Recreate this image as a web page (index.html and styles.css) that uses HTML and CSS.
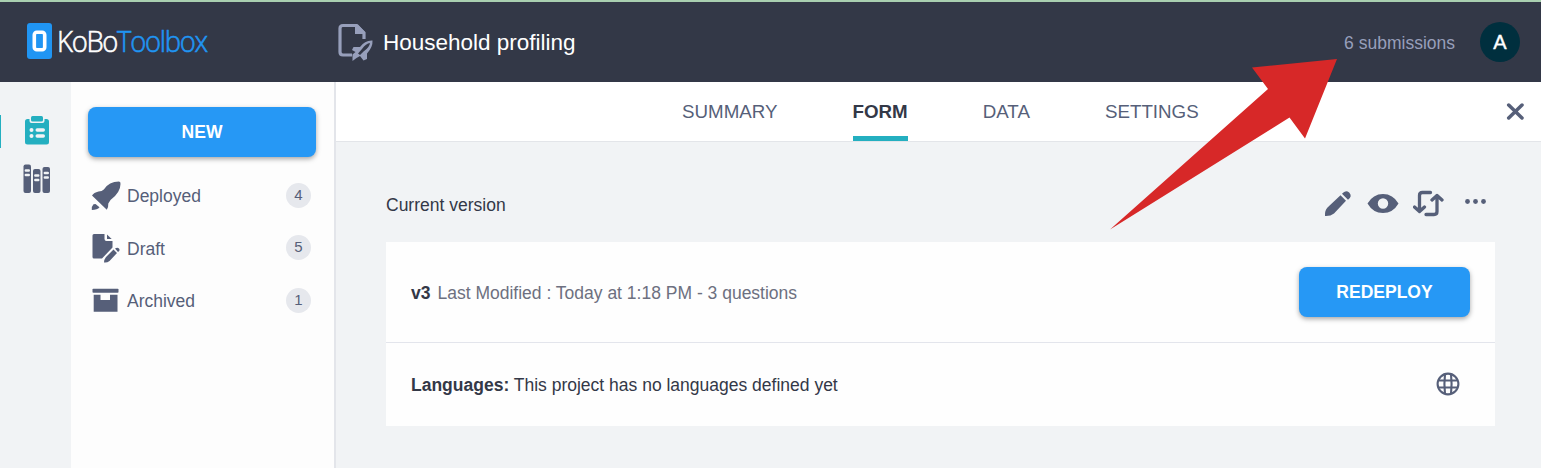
FILE: index.html
```html
<!DOCTYPE html>
<html lang="en">
<head>
<meta charset="utf-8">
<title>Household profiling | KoBoToolbox</title>
<link rel="stylesheet" href="styles.css">
</head>
<body>
<header class="header">
  <a class="logo">
    <svg width="25" height="36" viewBox="0 0 25 36">
      <rect width="25" height="36" rx="3" fill="#2095f3"/>
      <rect x="7.300" y="9.300" width="10.400" height="17.400" rx="2.500" fill="#2095f3" stroke="#fff" stroke-width="3.600"/>
    </svg>
    <span class="logo-text">KoBo<span class="logo-accent">Toolbox</span></span>
  </a>
  <div class="project">
    <svg width="36" height="40" viewBox="0 0 36 40" fill="#979fbb">
      <path d="M14 33H5Q2 33 2 30V6.500Q2 3.500 5 3.500H18.500L26 11V17" fill="none" stroke="#979fbb" stroke-width="3.200"/>
      <path d="M17 3V12H27V10L20 2.500Z"/>
      <path fill-rule="evenodd" d="M34.500 18.500Q27 18 22 25H15.500L14 28L17.500 30L14.500 32.500V39L18.500 36L22 34L25.500 38.500L29 37V31.500Q35 25 34.500 18.500ZM32 21Q31.500 25.500 25.500 29.500L22 33L20 31.500L24 27Q28 21.500 32 21Z"/>
    </svg>
    <h1 class="title">Household profiling</h1>
  </div>
  <span class="submissions">6 submissions</span>
  <span class="avatar">A</span>
</header>
<div class="body">
  <nav class="rail">
    <a class="rail-item active">
      <svg width="28" height="30" viewBox="0.5 0 28 30">
        <path d="M4 3H6V5Q6 7 8 7H19Q21 7 21 5V3H23Q25.500 3 25.500 5.500V26Q25.500 28.500 23 28.500H4Q1.500 28.500 1.500 26V5.500Q1.500 3 4 3Z" fill="#24afc0"/>
        <rect x="7.500" y="0" width="12" height="5.500" rx="1.500" fill="#24afc0"/>
        <g fill="#f1f3f5"><circle cx="8" cy="14" r="2"/><circle cx="8" cy="20" r="2"/><rect x="12" y="12.200" width="9.500" height="3.600" rx="1.700"/><rect x="12" y="18.200" width="9.500" height="3.600" rx="1.700"/></g>
      </svg>
    </a>
    <a class="rail-item">
      <svg width="28" height="30" viewBox="0 0 28 30">
        <g fill="#565f79"><rect x=".500" y=".500" width="7.500" height="28.500" rx="2"/><rect x="10" y="5" width="7.500" height="24" rx="2"/><rect x="19.500" y="3" width="7.500" height="26" rx="2"/></g>
        <path d="M2.800 6.500h3M2.800 11h3M12.300 11.500h3M12.300 16h3M21.800 9h3M21.800 13.500h3" stroke="#f1f3f5" stroke-width="2.400" stroke-linecap="round"/>
      </svg>
    </a>
  </nav>
  <aside class="drawer">
    <button class="button button-new">NEW</button>
    <div class="group">
      <svg width="30" height="32" viewBox="0 -1 30 32" fill="#565f79">
        <path d="M28 1.500Q18 1.500 12.800 9.500Q11 11.300 7.500 11.500Q2.800 12.500 1 15.500L15.800 29.800Q17.500 27.500 17.300 23.500L19.500 20Q29.500 12.500 29.500 4Q29.800 1.500 28 1.500Z"/><path d="M4.500 24L8.500 27.300Q6.500 30 .800 30Q.500 26 2.500 24.200Z"/>
      </svg><span class="group-name">Deployed</span><span class="count">4</span>
    </div>
    <div class="group">
      <svg width="30" height="30" viewBox="0 -.5 30 30" fill="#565f79">
        <path d="M3 .500H13.500V5.500Q13.500 7.500 15.500 7.500H21.500V14L11 25H3Q1.500 25 1.500 23.500V2Q1.500 .500 3 .500Z"/><path d="M16 1L20.700 5.500H16Z"/><path d="M22.500 16L26 19.500L18.500 27.500Q16 29.500 13 29Q13 26 15 23.500ZM24 15Q26.500 13.500 28 15Q29.500 17 27 18.500Z"/>
      </svg><span class="group-name">Draft</span><span class="count">5</span>
    </div>
    <div class="group">
      <svg width="30" height="30" viewBox="0 0 30 30" fill="#565f79">
        <rect x="1.500" y="3.700" width="26" height="4" rx=".800"/><path d="M2.700 9.700H9.500V15H19V9.700H26.500V26.700H2.700Z"/>
      </svg><span class="group-name">Archived</span><span class="count">1</span>
    </div>
  </aside>
  <main class="main">
    <nav class="tabs">
      <a class="tab">SUMMARY</a><a class="tab selected">FORM</a><a class="tab">DATA</a><a class="tab">SETTINGS</a>
      <svg class="close" width="18" height="18" viewBox="0 0 18 18"><path d="M2.700 3L16 16M16 3L2.700 16" stroke="#565f79" stroke-width="3.500" stroke-linecap="round"/></svg>
    </nav>
    <section class="content">
      <div class="toolbar">
        <h2 class="section-title">Current version</h2>
        <div class="actions">
          <svg width="30" height="30" viewBox="0 0 30 30" fill="#565f79"><path d="M17.500 6.200L23 11.700L11 24.500Q7.500 27.300 2 27Q1.500 21.500 4.500 18.500ZM19 4.800Q22.500 .500 26.200 3.500Q29.800 7.500 25 10.800Z"/></svg>
          <svg width="32" height="30" viewBox="0 0 32 30" fill="#565f79"><path fill-rule="evenodd" d="M.500 14.500Q6 5 16 5Q26 5 31.500 14.500Q26 24 16 24Q6 24 .500 14.500ZM21.200 14.500A5.200 5.200 0 1 0 10.800 14.500A5.200 5.200 0 1 0 21.200 14.500Z"/></svg>
          <svg width="32" height="30" viewBox="1 0 32 30" fill="none" stroke="#565f79" stroke-width="3.300" stroke-linecap="round" stroke-linejoin="round"><path d="M18.500 3.500H10.500Q7.500 3.500 7.500 6.500V22.500M2.500 18L7.500 22.500L12.500 18M14 25.500H22Q25 25.500 25 22.500V6.500M20 11L25 6.500L30 11"/></svg>
          <svg width="22" height="30" viewBox=".5 0 22 30" fill="#565f79"><circle cx="3" cy="12.500" r="2.400"/><circle cx="11" cy="12.500" r="2.400"/><circle cx="19" cy="12.500" r="2.400"/></svg>
        </div>
      </div>
      <div class="card">
        <div class="row row-version">
          <p class="text"><b class="version">v3</b><span class="muted">Last Modified : Today at 1:18 PM - 3 questions</span></p>
          <button class="button button-redeploy">REDEPLOY</button>
        </div>
        <div class="row row-languages">
          <p class="text"><b>Languages:</b> This project has no languages defined yet</p>
          <svg class="globe" width="24" height="24" viewBox="0 0 24 24" fill="none" stroke="#565f79" stroke-width="2.100"><circle cx="12" cy="12" r="10.400"/><path d="M2.500 8.500H21.500M2.500 15.500H21.500M9 2Q7.800 12 9 22M15 2Q16.200 12 15 22"/></svg>
        </div>
      </div>
    </section>
  </main>
</div>
<svg class="pointer" width="228" height="172" viewBox="0 0 228 172"><path d="M0 171.500L158 31L142 9.500L227 1L195 80.500L179.500 59.500Z" fill="#d72828"/></svg>
</body>
</html>
```
FILE: styles.css
```css
* { box-sizing: border-box; }
body {
  margin: 0;
  height: 468px;
  overflow: hidden;
  position: relative;
  display: flex;
  flex-direction: column;
  background: #f1f3f5;
  color: #333847;
  font: 17.5px/24px "Liberation Sans", Arial, sans-serif;
}
svg { display: block; flex: none; }
.header {
  height: 82px;
  flex: none;
  display: flex;
  align-items: center;
  padding: 0 21px 0 27px;
  border-top: 2px solid #a9cfb0;
  background: #333847;
}
.logo { width: 311px; display: flex; align-items: center; gap: 5px; padding-bottom: 2px; }
.logo-text {
  font: 300 29.5px/40px "Open Sans", sans-serif;
  letter-spacing: -1.4px;
  color: #fff;
  white-space: nowrap;
  transform: scaleX(.93);
  transform-origin: left;
  -webkit-text-stroke: .6px currentColor;
}
.logo-accent { color: #2095f3; }
.project { flex: 1; display: flex; align-items: center; gap: 9px; }
.title { margin: 0; padding-top: 2px; font-size: 22.5px; font-weight: 400; color: #fff; }
.submissions { color: #979fbb; padding-top: 2px; }
.avatar {
  width: 40px;
  height: 40px;
  margin-left: 25px;
  border-radius: 50%;
  background: #002f3e;
  color: #fff;
  font-size: 20px;
  line-height: 40px;
  text-align: center;
  -webkit-text-stroke: .4px #fff;
}
.body { flex: 1; display: flex; }
.rail { width: 71px; padding-top: 33px; display: flex; flex-direction: column; gap: 15px; }
.rail-item { height: 33px; padding: 1px 0 0 23px; }
.active { border-left: 1px solid #24afc0; }
.drawer { width: 265px; padding: 25px 18px 0 17px; background: #fdfdfd; border-right: 2px solid #e3e5ea; }
.button {
  display: block;
  height: 50px;
  padding: 0;
  border: 0;
  border-radius: 8px;
  background: #2698f5;
  color: #fff;
  font: bold 17.5px "Liberation Sans", Arial, sans-serif;
  box-shadow: 0 2px 5px rgba(0, 0, 0, .35);
}
.button-new { width: 228px; margin-bottom: 12px; }
.group { height: 52.5px; display: flex; align-items: center; padding: 0 5px 0 3px; color: #565f79; }
.group-name { flex: 1; padding: 2px 0 0 6px; }
.count {
  width: 25px;
  height: 25px;
  border-radius: 50%;
  background: #e6e8ed;
  font-size: 15px;
  line-height: 24.5px;
  text-align: center;
}
.main { flex: 1; }
.tabs {
  height: 60px;
  display: flex;
  gap: 75px;
  padding: 0 17px 0 346px;
  background: #fff;
  border-bottom: 1px solid #e3e5e9;
  font-size: 18.75px;
  line-height: 59px;
  color: #565f79;
}
.selected { font-weight: bold; color: #333847; border-bottom: 5px solid #24afc0; }
.close { margin: 20px 0 0 auto; }
.content { padding: 46px 46px 0 50px; }
.toolbar { height: 54px; display: flex; justify-content: space-between; }
.section-title { margin: 5px 0 0; font-size: 17.5px; font-weight: 400; }
.actions { display: flex; gap: 14px; padding: 1px 8px 0 0; }
.actions svg:last-child { margin-left: 6px; }
.card { background: #fefefe; }
.row { display: flex; align-items: center; justify-content: space-between; padding: 0 25px; }
.row-version { height: 101px; border-bottom: 1px solid #e3e5ec; }
.row-version .text { padding-top: 2px; }
.row-languages { height: 83px; }
.text { margin: 0; }
.version { margin-right: 7px; }
.muted { color: #6d7080; }
.button-redeploy { width: 171px; }
.globe { margin: 0 10px 2px 0; }
.pointer { position: absolute; left: 1110px; top: 58px; }
```
